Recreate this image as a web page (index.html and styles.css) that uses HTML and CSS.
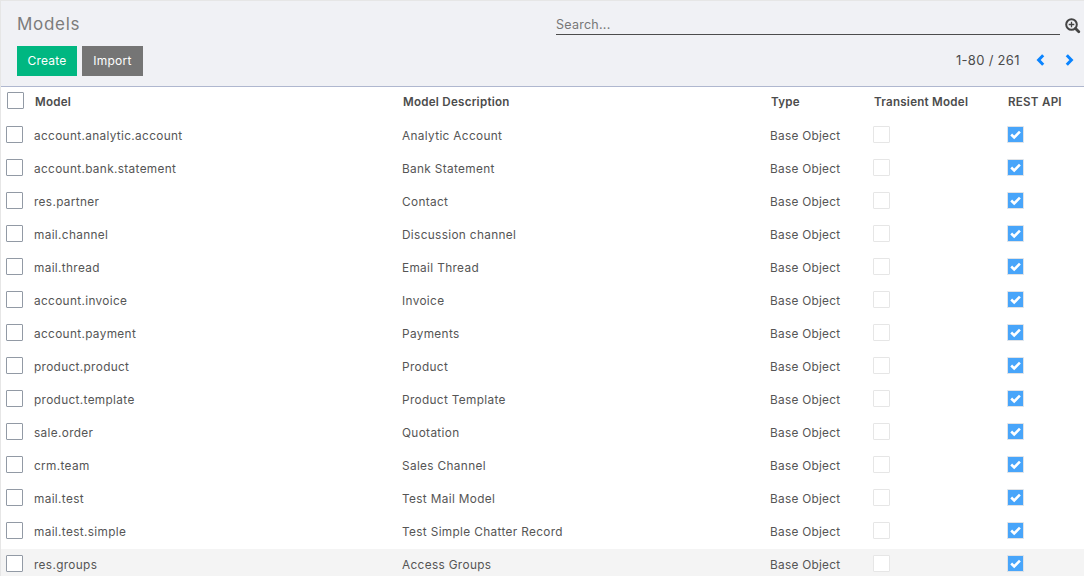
FILE: index.html
```
<!DOCTYPE html>
<html lang="en">
<head>
<meta charset="utf-8">
<title>Models</title>
<link rel="stylesheet" href="styles.css">
</head>
<body>
<div class="app">
  <header class="panel">
    <div class="left">
      <h1 class="title">Models</h1>
      <div class="buttons"><button class="btn create">Create</button><button class="btn import">Import</button></div>
    </div>
    <div class="right">
      <div class="search">
        <input class="search-input" type="text" placeholder="Search...">
        <svg class="magnifier" width="16" height="16" viewBox="0 0 16 16" fill="none" stroke="#444"><circle cx="6.5" cy="6.5" r="5.3" stroke-width="2"/><path d="M10.5 10.5L13.8 13.8" stroke-width="2.8" stroke-linecap="round"/><path d="M6.5 3.7V9.3M3.7 6.5H9.3" stroke-width="1.3"/></svg>
      </div>
      <div class="pager">
        <span class="range">1-80 / 261</span>
        <svg class="prev" width="9" height="12" viewBox="0 0 9 12"><path d="M7.2 1.2L2.6 6L7.2 10.8" /></svg>
        <svg class="next" width="9" height="12" viewBox="0 0 9 12"><path d="M1.8 1.2L6.4 6L1.8 10.8" /></svg>
      </div>
    </div>
  </header>
  <main class="list" id="list">
    <div class="row head"><span class="box"></span><span class="h-model">Model</span><span class="h-desc">Model Description</span><span class="h-type">Type</span><span class="h-trans">Transient Model</span><span class="h-rest">REST API</span></div>
  </main>
</div>
<script src="list.js"></script>
</body>
</html>
```

FILE: styles.css
```
* { box-sizing: border-box; }
body { margin: 0; background: #fff; font-family: Inter, "Noto Sans", sans-serif; color: #4c4c4c; overflow: hidden; }
.app { height: 576px; border-top: 1px solid #e6e6e6; border-left: 1px solid #e6e6e6; overflow: hidden; }
.panel { height: 86px; display: flex; background: #f0f1f5; border-bottom: 1px solid #afb7cf; }
.left { width: 555px; padding: 12px 0 0 16px; }
.title { margin: 0; height: 24px; line-height: 23px; font-size: 17px; font-weight: 400; letter-spacing: .7px; color: #7c7c7c; }
.buttons { display: flex; gap: 5px; margin-top: 9px; }
.btn { height: 30px; padding: 0; border: 0; color: #fff; font: 400 12px/30px Inter, sans-serif; letter-spacing: .25px; }
.create { width: 60px; background: #00b781; }
.import { width: 61px; background: #757575; }
.right { flex: 1; }
.search { display: flex; padding-top: 12px; }
.search-input { width: 504px; height: 22px; padding: 2px 0 0; border: 0; border-bottom: 1px solid #4c4c4c; background: transparent; font: 400 12.5px Inter, sans-serif; letter-spacing: .25px; outline: 0; }
.search-input::placeholder { color: #777; opacity: 1; }
.magnifier { margin: 5px 0 0 5px; }
.pager { display: flex; align-items: center; height: 20px; margin-top: 15px; padding-left: 400px; font-size: 13px; }
.range { width: 80px; letter-spacing: .3px; white-space: nowrap; }
.pager path { fill: none; stroke: #0a84ff; stroke-width: 3; }
.next { margin-left: 20px; }
.row { display: grid; grid-template-columns: 28px 368px 368px 103px 134px 1fr; height: 33px; padding-left: 5px; font-size: 11.8px; line-height: 32px; letter-spacing: .35px; white-space: nowrap; color: #555; }
.type { letter-spacing: .28px; }
.head { padding-left: 6px; font-size: 11.6px; font-weight: 600; line-height: 30px; letter-spacing: .25px; color: #4c4c4c; }
.hover { background: #f4f4f4; }
.box { width: 17px; height: 17px; margin-top: 6px; background: #fff; border: 1px solid #929aa5; border-radius: 1px; }
.head .box { margin-top: 5px; }
.off { border-color: #e6e6e6; }
.on { display: block; background: #48a5fa; border-color: #dfe3e8; }
.on svg { display: block; }
```

FILE: list.js
```
const records = [
  ["account.analytic.account", "Analytic Account"],
  ["account.bank.statement", "Bank Statement"],
  ["res.partner", "Contact"],
  ["mail.channel", "Discussion channel"],
  ["mail.thread", "Email Thread"],
  ["account.invoice", "Invoice"],
  ["account.payment", "Payments"],
  ["product.product", "Product"],
  ["product.template", "Product Template"],
  ["sale.order", "Quotation"],
  ["crm.team", "Sales Channel"],
  ["mail.test", "Test Mail Model"],
  ["mail.test.simple", "Test Simple Chatter Record"],
  ["res.groups", "Access Groups"]
];
const check = '<svg width="15" height="15" viewBox="0 0 15 15"><path d="M3.2 7.5L6.2 10.4L11.9 4.7" fill="none" stroke="#fff" stroke-width="2.6"/></svg>';
document.getElementById("list").insertAdjacentHTML("beforeend", records.map(([model, description], i) =>
  `<div class="row${i === 13 ? " hover" : ""}"><span class="box"></span><span>${model}</span><span>${description}</span><span class="type">Base Object</span><span class="box off"></span><span class="box on">${check}</span></div>`
).join(""));
```
